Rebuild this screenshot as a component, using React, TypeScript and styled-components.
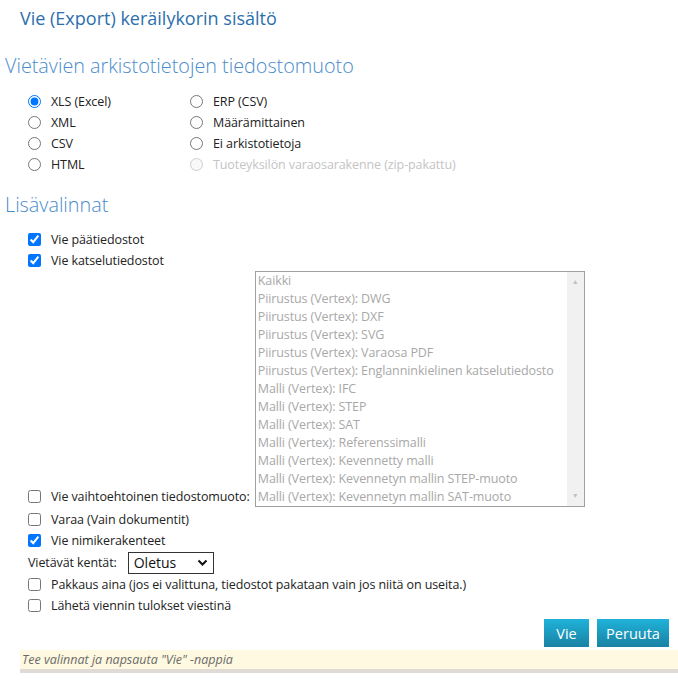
import styled, { createGlobalStyle } from "styled-components";

const GlobalStyle = createGlobalStyle`
	body {
		margin: 0;
		background: #fff;
		font-family: "Open Sans", "Noto Sans", sans-serif;
		font-size: 12.5px;
		letter-spacing: -0.1px;
		color: #222;
	}
`;

const Page = styled.div`
	width: 678px;
	height: 682px;
	display: flex;
	flex-direction: column;
	overflow: hidden;
`;

const Title = styled.h1`
	margin: 0;
	padding: 6px 0 0 20px;
	font-size: 18px;
	font-weight: 400;
	letter-spacing: 0;
	line-height: 24px;
	color: #2c6fad;
`;

const SectionTitle = styled.h2<{ $top: number }>`
	margin: ${(p) => p.$top}px 0 0;
	padding-left: 5px;
	font-size: 19.8px;
	font-weight: 300;
	letter-spacing: 0;
	line-height: 28px;
	color: #4a8ccb;
`;

const FormatGrid = styled.div`
	display: grid;
	grid-template-columns: 162px auto;
	grid-auto-flow: column;
	grid-template-rows: repeat(4, 21px);
	padding: 11px 0 0 25px;
`;

const Option = styled.label<{ $disabled?: boolean }>`
	display: flex;
	align-items: center;
	gap: 10px;
	height: 21px;
	color: ${(p) => (p.$disabled ? "#c4c4c4" : "#222")};
	white-space: nowrap;

	input {
		margin: 0 0 0 3px;
		width: 13px;
		height: 13px;
	}
`;

const Options = styled.div`
	display: flex;
	flex-direction: column;
	padding: 10px 0 0 25px;
`;

const ListRow = styled.div`
	display: flex;
	align-items: flex-end;
	gap: 5px;
	margin-bottom: 2px;
`;

const ListBox = styled.div`
	width: 328px;
	height: 234px;
	border: 1px solid #a0a0a0;
	display: flex;
	background: #fff;
`;

const ListItems = styled.div`
	flex: 1;
	padding-left: 2px;
	overflow: hidden;

	div {
		height: 18px;
		line-height: 18px;
		color: #a8a8a8;
		white-space: nowrap;
	}
`;

const ScrollTrack = styled.div`
	width: 17px;
	background: #f1f1f1;
	display: flex;
	flex-direction: column;
	justify-content: space-between;
	align-items: center;
	padding: 6px 0;
	color: #c2c2c2;
	font-size: 7px;
	line-height: 8px;
`;

const FieldRow = styled.div`
	display: flex;
	align-items: center;
	gap: 11px;
	height: 23px;
	padding-left: 3px;
`;

const FakeSelect = styled.div`
	width: 86px;
	height: 22px;
	box-sizing: border-box;
	border: 1px solid #333;
	display: flex;
	align-items: center;
	justify-content: space-between;
	padding: 0 5px;
	font-size: 14px;
	letter-spacing: 0;
	color: #111;
`;

const ButtonBar = styled.div`
	display: flex;
	justify-content: flex-end;
	gap: 8px;
	padding: 3px 9px 3px 0;
`;

const Button = styled.button<{ $w: number }>`
	width: ${(p) => p.$w}px;
	height: 28px;
	padding: 0;
	border: none;
	background: linear-gradient(#1fb2da, #1a82a3);
	color: #fff;
	font-family: "Open Sans", sans-serif;
	font-size: 14.5px;
	cursor: pointer;
`;

const Hint = styled.div`
	margin-left: 20px;
	height: 19px;
	line-height: 19px;
	padding-left: 2px;
	background: #fef9e0;
	border-bottom: 4px solid #e0dbd7;
	color: #6b6b6b;
	font-style: italic;
	font-size: 12.5px;
	letter-spacing: 0;
`;

const formats = [
	["XLS (Excel)", true, false],
	["XML", false, false],
	["CSV", false, false],
	["HTML", false, false],
	["ERP (CSV)", false, false],
	["Määrämittainen", false, false],
	["Ei arkistotietoja", false, false],
	["Tuoteyksilön varaosarakenne (zip-pakattu)", false, true],
] as const;

const viewFiles = [
	"Kaikki",
	"Piirustus (Vertex): DWG",
	"Piirustus (Vertex): DXF",
	"Piirustus (Vertex): SVG",
	"Piirustus (Vertex): Varaosa PDF",
	"Piirustus (Vertex): Englanninkielinen katselutiedosto",
	"Malli (Vertex): IFC",
	"Malli (Vertex): STEP",
	"Malli (Vertex): SAT",
	"Malli (Vertex): Referenssimalli",
	"Malli (Vertex): Kevennetty malli",
	"Malli (Vertex): Kevennetyn mallin STEP-muoto",
	"Malli (Vertex): Kevennetyn mallin SAT-muoto",
];

const Check = ({ label, checked }: { label: string; checked?: boolean }) => (
	<Option>
		<input type="checkbox" defaultChecked={checked} />
		{label}
	</Option>
);

export default function App() {
	return (
		<Page>
			<GlobalStyle />
			<Title>Vie (Export) keräilykorin sisältö</Title>
			<SectionTitle $top={22}>Vietävien arkistotietojen tiedostomuoto</SectionTitle>
			<FormatGrid>
				{formats.map(([label, checked, disabled]) => (
					<Option key={label} $disabled={disabled}>
						<input type="radio" name="format" defaultChecked={checked} disabled={disabled} />
						{label}
					</Option>
				))}
			</FormatGrid>
			<SectionTitle $top={16}>Lisävalinnat</SectionTitle>
			<Options>
				<Check label="Vie päätiedostot" checked />
				<Check label="Vie katselutiedostot" checked />
				<ListRow>
					<Check label="Vie vaihtoehtoinen tiedostomuoto:" />
					<ListBox>
						<ListItems>
							{viewFiles.map((f) => (
								<div key={f}>{f}</div>
							))}
						</ListItems>
						<ScrollTrack>
							<span>▲</span>
							<span>▼</span>
						</ScrollTrack>
					</ListBox>
				</ListRow>
				<Check label="Varaa (Vain dokumentit)" />
				<Check label="Vie nimikerakenteet" checked />
				<FieldRow>
					Vietävät kentät:
					<FakeSelect>
						Oletus
						<svg width="11" height="8" viewBox="0 0 11 8">
							<path d="M1.5 1.5 L5.5 5.5 L9.5 1.5" fill="none" stroke="#111" strokeWidth="2" />
						</svg>
					</FakeSelect>
				</FieldRow>
				<Check label="Pakkaus aina (jos ei valittuna, tiedostot pakataan vain jos niitä on useita.)" />
				<Check label="Lähetä viennin tulokset viestinä" />
			</Options>
			<ButtonBar>
				<Button $w={45}>Vie</Button>
				<Button $w={72}>Peruuta</Button>
			</ButtonBar>
			<Hint>Tee valinnat ja napsauta "Vie" -nappia</Hint>
		</Page>
	);
}
